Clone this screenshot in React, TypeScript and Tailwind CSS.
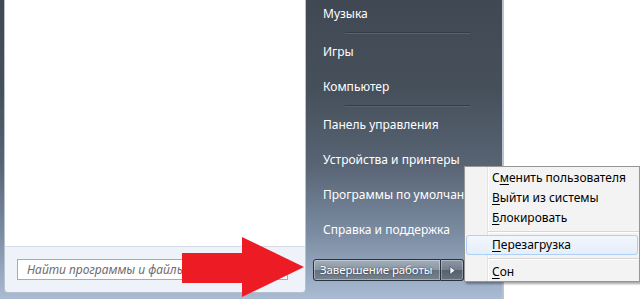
import React from "react";

const FONT = { fontFamily: '"Segoe UI", "Noto Sans", sans-serif' };

const PLACES: (string | null)[] = [
  "Музыка",
  null,
  "Игры",
  "Компьютер",
  null,
  "Панель управления",
  "Устройства и принтеры",
  "Программы по умолчанию",
  "Справка и поддержка",
];

function MenuItem({ pre, key1, post }: { pre: string; key1: string; post: string }) {
  return (
    <div className="h-[20px] flex items-center pl-[27px] text-[12px] text-black">
      {pre}
      <span className="underline underline-offset-2">{key1}</span>
      {post}
    </div>
  );
}

function Separator() {
  return (
    <div className="h-[7px] flex flex-col justify-center pl-[23px]">
      <div className="h-px bg-[#d7d7d7]" />
      <div className="h-px bg-white" />
    </div>
  );
}

export default function App() {
  return (
    <div
      className="relative w-[640px] h-[299px] overflow-hidden flex bg-[linear-gradient(to_bottom,#404854_0%,#46505b_30%,#586474_55%,#7b8ca2_78%,#a9bcd4_100%)] select-none"
      style={FONT}
    >
      {/* programs column */}
      <div className="ml-[4px] w-[302px] h-[293px] flex flex-col border-x border-b border-[#b8c2ce] rounded-b-[4px] overflow-hidden">
        <div className="flex-1 bg-white" />
        <div className="h-[46px] bg-[#eef2f9] border-t border-[#d6dde8] flex items-start pt-[12px] pl-[12px]">
          <div className="w-[271px] h-[21px] bg-white border border-[#a3abb6] flex items-center pl-[9px] text-[12px] italic text-[#6d6d6d]">
            Найти программы и файлы
          </div>
        </div>
      </div>

      {/* places column */}
      <div className="ml-[1px] w-[195px] flex flex-col -mt-[4px]">
        {PLACES.map((p, i) =>
          p === null ? (
            <div key={i} className="h-[3px] flex flex-col justify-center pl-[38px] pr-[32px]">
              <div className="h-px w-full bg-[#353c46]" />
              <div className="h-px w-full bg-[#59636f]" />
            </div>
          ) : (
            <div key={i} className="h-[35px] flex items-center pl-[16px] text-[12px] text-white whitespace-nowrap">
              {p}
            </div>
          )
        )}
        <div className="mt-[12px] ml-[6px] flex h-[22px]">
          <div className="w-[128px] h-full rounded-l-[3px] border border-[#2c323b] bg-[linear-gradient(to_bottom,#a3adba_0%,#8a96a4_48%,#65727f_52%,#76838f_100%)] shadow-[inset_0_0_0_1px_rgba(255,255,255,0.35)] flex items-center pl-[6px] text-[11.5px] tracking-[-0.1px] text-white whitespace-nowrap [text-shadow:0_0_2px_rgba(0,0,0,0.6)]">
            Завершение работы
          </div>
          <div className="w-[23px] h-full rounded-r-[3px] border border-l-0 border-[#2c323b] bg-[linear-gradient(to_bottom,#8c97a4_0%,#74808e_48%,#56616e_52%,#66727f_100%)] shadow-[inset_0_0_0_1px_rgba(255,255,255,0.3)] flex items-center justify-center">
            <svg width="7" height="9" viewBox="0 0 7 9">
              <path d="M1 0.5 L6 4.5 L1 8.5 Z" fill="#f4f6f8" stroke="#3a414a" strokeWidth="0.6" />
            </svg>
          </div>
        </div>
      </div>

      {/* right white area */}
      <div className="flex-1 border-l-2 border-[#b9c3cf] bg-white" />

      {/* shutdown submenu */}
      <div className="absolute left-[464px] top-[166px] w-[176px] h-[116px] bg-[#f3f3f3] border border-[#979797] shadow-[2px_2px_2px_rgba(0,0,0,0.35)] pt-px">
        <div className="absolute left-[22px] top-0 bottom-0 w-px bg-[#e2e3e3]" />
        <div className="absolute left-[23px] top-0 bottom-0 w-px bg-white" />
        <div className="relative">
          <MenuItem pre="С" key1="м" post="енить пользователя" />
          <MenuItem pre="" key1="В" post="ыйти из системы" />
          <MenuItem pre="" key1="Б" post="локировать" />
          <Separator />
          <div className="mx-[1px] h-[20px] rounded-[3px] border border-[#aecff7] bg-[linear-gradient(to_bottom,#f3f7fd,#e5eef9)] flex items-center pl-[25px] text-[12px] text-black">
            <span className="underline underline-offset-2">П</span>ерезагрузка
          </div>
          <Separator />
          <MenuItem pre="" key1="С" post="он" />
        </div>
      </div>

      {/* red arrow overlay */}
      <svg className="absolute left-0 top-0 pointer-events-none" width="640" height="299">
        <polygon points="182,253 242,253 242,237 304,267 242,297 242,283 182,283" fill="#ed1c24" />
      </svg>
    </div>
  );
}
